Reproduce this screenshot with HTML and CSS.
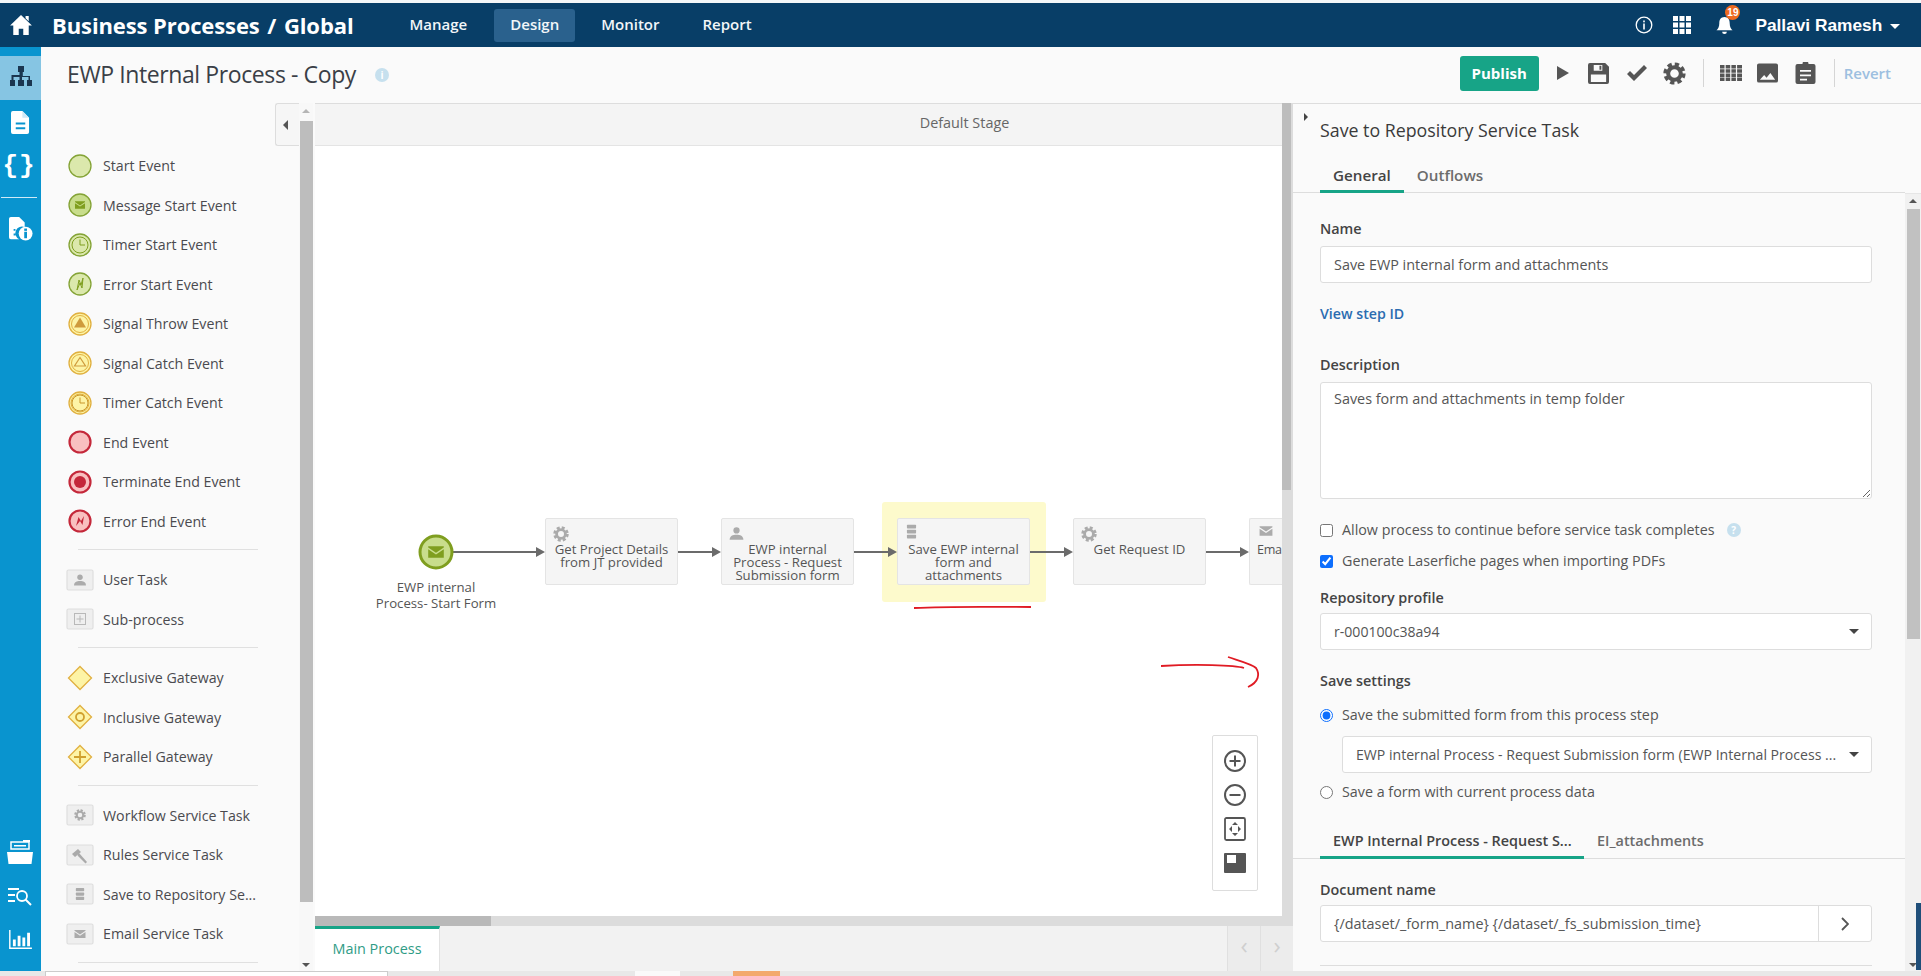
FILE: index.html
```html
<!DOCTYPE html>
<html lang="en">
<head>
<meta charset="utf-8">
<title>EWP Internal Process - Copy</title>
<link rel="stylesheet" href="styles.css">
</head>
<body>
<svg class="sprite" width="0" height="0">
  <defs>
    <symbol id="gear" viewBox="0 0 24 24">
      <circle cx="12" cy="12" r="9.3" fill="none" stroke="currentColor" stroke-width="4.6" stroke-dasharray="4.3 3"/>
      <circle cx="12" cy="12" r="6.6" fill="none" stroke="currentColor" stroke-width="4.2"/>
    </symbol>
    <symbol id="user" viewBox="0 0 24 24">
      <circle cx="12" cy="7" r="5" fill="currentColor"/>
      <path d="M1 22c0-6 5-8 11-8s11 2 11 8z" fill="currentColor"/>
    </symbol>
    <symbol id="mail" viewBox="0 0 24 24">
      <path d="M1 4h22v1.5L12 13 1 5.500zM1 8l11 7.500L23 8v12H1z" fill="currentColor"/>
    </symbol>
    <symbol id="stack" viewBox="0 0 24 24">
      <rect x="2" y="1" width="20" height="6" rx="1.500" fill="currentColor"/>
      <rect x="2" y="9" width="20" height="6" rx="1.500" fill="currentColor"/>
      <rect x="2" y="17" width="20" height="6" rx="1.500" fill="currentColor"/>
    </symbol>
    <symbol id="clock" viewBox="0 0 28 28">
      <circle cx="14" cy="14" r="8" fill="none" stroke="currentColor" stroke-width="1"/>
      <path d="M14 8.500V14h5" fill="none" stroke="currentColor" stroke-width="1"/>
    </symbol>
  </defs>
</svg>

<div class="topstrip"></div>
<header class="header">
  <svg class="home" viewBox="0 0 24 22" width="22" height="20"><path d="M12 0l12 11.500h-3.500V22H14.500v-7h-5v7H3.500V11.500H0zM17 1h3.500v6L17 3.500z" fill="#fff"/></svg>
  <div class="brand">Business Processes <span class="brand-sep">/</span> Global</div>
  <nav class="nav">
    <a class="nav-item">Manage</a>
    <a class="nav-item nav-active">Design</a>
    <a class="nav-item">Monitor</a>
    <a class="nav-item nav-last">Report</a>
  </nav>
  <div class="header-right">
    <svg class="hicon" viewBox="0 0 18 18" width="18" height="18"><circle cx="9" cy="9" r="7.800" fill="none" stroke="#fff" stroke-width="1.300"/><rect x="8.200" y="7.500" width="1.600" height="6" fill="#fff"/><rect x="8.200" y="4.500" width="1.600" height="1.800" fill="#fff"/></svg>
    <svg class="hicon" viewBox="0 0 18 18" width="18" height="18"><path d="M0 0h5v5H0zM6.500 0h5v5h-5zM13 0h5v5h-5zM0 6.500h5v5H0zM6.500 6.500h5v5h-5zM13 6.500h5v5h-5zM0 13h5v5H0zM6.500 13h5v5h-5zM13 13h5v5h-5z" fill="#fff"/></svg>
    <div class="bell">
      <svg viewBox="0 0 18 20" width="17" height="19"><path d="M9 1c4 0 5.500 3 5.500 6.500 0 4 1.500 6 3 7.500H.5c1.500-1.500 3-3.500 3-7.500C3.500 4 5 1 9 1zM6.500 16.500h5a2.500 2.500 0 0 1-5 0z" fill="#fff"/></svg>
      <span class="badge">19</span>
    </div>
    <div class="username">Pallavi Ramesh <span class="caret-white"></span></div>
  </div>
</header>

<div class="body">
  <aside class="rail">
    <div class="rail-top">
      <div class="rail-item rail-active">
        <svg viewBox="0 0 24 24" width="24" height="24"><path d="M9 0h6v6h-1.200v4H21v4h2v-1 7h-5v-6h1.500v-3h-6.500v3H15v6H9v-6h1.500v-3H4.500v3H6v6H1v-6h1.500v-5h8V6H9z" fill="#1b3650"/></svg>
      </div>
      <div class="rail-item">
        <svg viewBox="0 0 20 24" width="19" height="23"><path d="M2 0h10l7 7v15a2 2 0 0 1-2 2H2a2 2 0 0 1-2-2V2a2 2 0 0 1 2-2zM5 12v2h10v-2zM5 17v2h10v-2z" fill="#fff" fill-rule="evenodd"/><path d="M12 0l7 7h-7z" fill="#cfe9f6"/></svg>
      </div>
      <div class="rail-item rail-braces">{}</div>
      <div class="rail-divider"></div>
      <div class="rail-item">
        <svg viewBox="0 0 26 26" width="24" height="24"><path d="M2 0h9l6 6v5a7 7 0 0 0-6 13H2a2 2 0 0 1-2-2V2a2 2 0 0 1 2-2zM5 13v2h2v-2zM5 18v2h2v-2z" fill="#fff" fill-rule="evenodd"/><circle cx="18" cy="18" r="7.500" fill="#fff"/><rect x="16.500" y="16" width="3" height="7" fill="#0994cf"/><rect x="16.500" y="12.500" width="3" height="2.500" fill="#0994cf"/></svg>
      </div>
    </div>
    <div class="rail-bottom">
      <svg viewBox="0 0 26 26" width="26" height="26"><path d="M4 3h18v7H4z" fill="none" stroke="#fff" stroke-width="1.500"/><path d="M7 6h12v1.500H7zM16 1h7v2h-7z" fill="#fff"/><path d="M0 13h26l-1.500 12H1.500z" fill="#fff"/></svg>
      <svg viewBox="0 0 24 20" width="24" height="20"><path d="M0 2h11v2H0zM0 8h7v2H0zM0 14h7v2H0z" fill="#fff"/><circle cx="14" cy="10" r="5" fill="none" stroke="#fff" stroke-width="1.800"/><path d="M17.500 13.500L23 19" stroke="#fff" stroke-width="2"/></svg>
      <svg class="rail-chart" viewBox="0 0 24 20" width="23" height="19"><path d="M0 0h1.500v18.500H24V20H0zM4 10h3v7H4zM9 6h3v11H9zM14 8h3v9h-3zM19 3h3v14h-3z" fill="#fff"/></svg>
    </div>
  </aside>

  <main class="main">
    <div class="titlebar">
      <h1 class="page-title">EWP Internal Process - Copy</h1>
      <span class="title-info">i</span>
      <div class="toolbar">
        <button class="publish">Publish</button>
        <svg class="tb tb-play" viewBox="0 0 12 14" width="12" height="14"><path d="M0 0l12 7-12 7z"/></svg>
        <svg class="tb tb-save" viewBox="0 0 22 22" width="21" height="21"><path d="M2 0h16l4 4v16a2 2 0 0 1-2 2H2a2 2 0 0 1-2-2V2a2 2 0 0 1 2-2zm4 2v6h9V2zm6 1h2v4h-2zM3 12v8h16v-8z" fill-rule="evenodd"/></svg>
        <svg class="tb tb-check" viewBox="0 0 20 16" width="20" height="16"><path d="M0 9l3-3 4 4L17 0l3 3L7 16z"/></svg>
        <svg class="tb tb-gear" width="23" height="23"><use href="#gear"/></svg>
        <span class="tb-sep"></span>
        <svg class="tb tb-grid" viewBox="0 0 22 16" width="22" height="16"><path d="M0 0h4.500v3.500H0zM5.700 0h4.500v3.500H5.700zM11.400 0h4.500v3.500h-4.500zM17.100 0H22v3.500h-4.900zM0 4.200h4.500v3.500H0zM5.700 4.200h4.500v3.500H5.700zM11.400 4.200h4.500v3.500h-4.500zM17.100 4.200H22v3.500h-4.900zM0 8.400h4.500v3.500H0zM5.700 8.400h4.500v3.500H5.700zM11.400 8.400h4.500v3.500h-4.500zM17.100 8.400H22v3.500h-4.900zM0 12.500h4.500V16H0zM5.700 12.500h4.500V16H5.700zM11.400 12.500h4.500V16h-4.500zM17.100 12.500H22V16h-4.900z"/></svg>
        <svg class="tb tb-image" viewBox="0 0 22 20" width="21" height="20"><path d="M2 0h18a2 2 0 0 1 2 2v16a2 2 0 0 1-2 2H2a2 2 0 0 1-2-2V2a2 2 0 0 1 2-2zm1 17h16l-5-7-4 5-2.500-3z" fill-rule="evenodd"/></svg>
        <svg class="tb tb-clip" viewBox="0 0 20 22" width="21" height="22"><path d="M2 2h5a3 3 0 0 1 6 0h5a2 2 0 0 1 2 2v16a2 2 0 0 1-2 2H2a2 2 0 0 1-2-2V4a2 2 0 0 1 2-2zm2.500 6v1.800h11V8zm0 4.500v1.800h11v-1.800zm0 4.200v1.800h7v-1.800z" fill-rule="evenodd"/></svg>
        <span class="tb-sep tb-sep2"></span>
        <a class="revert">Revert</a>
      </div>
    </div>

    <div class="workspace">
      <section class="palette">
        <div class="palette-list">
          <div class="pitem"><svg class="pi" viewBox="0 0 28 28"><circle class="ev-green" cx="14" cy="14" r="11"/></svg><span>Start Event</span></div>
          <div class="pitem"><svg class="pi" viewBox="0 0 28 28"><circle class="ev-green2" cx="14" cy="14" r="11"/><svg x="8.500" y="8.500" width="11" height="11" class="c-olive"><use href="#mail"/></svg></svg><span>Message Start Event</span></div>
          <div class="pitem"><svg class="pi c-olive" viewBox="0 0 28 28"><circle class="ev-green" cx="14" cy="14" r="11"/><use href="#clock"/></svg><span>Timer Start Event</span></div>
          <div class="pitem"><svg class="pi" viewBox="0 0 28 28"><circle class="ev-green" cx="14" cy="14" r="11"/><path class="bolt-green" d="M11 20l2-10 2 5 2-7-1 10-2-5z"/></svg><span>Error Start Event</span></div>
          <div class="pitem"><svg class="pi" viewBox="0 0 28 28"><circle class="ev-yellow" cx="14" cy="14" r="11"/><circle class="ring-yellow" cx="14" cy="14" r="8.500"/><path class="tri-fill" d="M14 7.500l6 10H8z"/></svg><span>Signal Throw Event</span></div>
          <div class="pitem"><svg class="pi" viewBox="0 0 28 28"><circle class="ev-yellow" cx="14" cy="14" r="11"/><circle class="ring-yellow" cx="14" cy="14" r="8.500"/><path class="tri-line" d="M14 8.500l5.500 8.500h-11z"/></svg><span>Signal Catch Event</span></div>
          <div class="pitem"><svg class="pi c-amber" viewBox="0 0 28 28"><circle class="ev-yellow" cx="14" cy="14" r="11"/><circle class="ring-yellow" cx="14" cy="14" r="9"/><use href="#clock"/></svg><span>Timer Catch Event</span></div>
          <div class="pitem"><svg class="pi" viewBox="0 0 28 28"><circle class="ev-red" cx="14" cy="14" r="10.500"/></svg><span>End Event</span></div>
          <div class="pitem"><svg class="pi" viewBox="0 0 28 28"><circle class="ev-red" cx="14" cy="14" r="10.500"/><circle class="dot-red" cx="14" cy="14" r="6"/></svg><span>Terminate End Event</span></div>
          <div class="pitem"><svg class="pi" viewBox="0 0 28 28"><circle class="ev-red" cx="14" cy="14" r="10.500"/><path class="dot-red" d="M10 19l2.500-9 2.500 4 3-5-1.500 9-2.500-4z"/></svg><span>Error End Event</span></div>
          <div class="pdiv"></div>
          <div class="pitem"><svg class="pi c-grey" viewBox="0 0 28 28"><rect class="box" x="1" y="4" width="26" height="20" rx="1.500"/><svg x="7.500" y="7" width="13" height="14"><use href="#user"/></svg></svg><span>User Task</span></div>
          <div class="pitem"><svg class="pi" viewBox="0 0 28 28"><rect class="box" x="1" y="4" width="26" height="20" rx="1.500"/><rect class="sub" x="8.500" y="8.500" width="11" height="11"/><path class="sub" d="M14 10.500v7M10.500 14h7"/></svg><span>Sub-process</span></div>
          <div class="pdiv"></div>
          <div class="pitem"><svg class="pi" viewBox="0 0 28 28"><path class="gw" d="M14 2.500L25.500 14 14 25.500 2.500 14z"/></svg><span>Exclusive Gateway</span></div>
          <div class="pitem"><svg class="pi" viewBox="0 0 28 28"><path class="gw" d="M14 2.500L25.500 14 14 25.500 2.500 14z"/><circle class="gw-in" cx="14" cy="14" r="4"/></svg><span>Inclusive Gateway</span></div>
          <div class="pitem"><svg class="pi" viewBox="0 0 28 28"><path class="gw" d="M14 2.500L25.500 14 14 25.500 2.500 14z"/><path class="gw-in" d="M14 8v12M8 14h12"/></svg><span>Parallel Gateway</span></div>
          <div class="pdiv"></div>
          <div class="pitem"><svg class="pi c-grey" viewBox="0 0 28 28"><rect class="box" x="1" y="4" width="26" height="20" rx="1.500"/><svg x="8" y="8" width="12" height="12"><use href="#gear"/></svg></svg><span>Workflow Service Task</span></div>
          <div class="pitem"><svg class="pi" viewBox="0 0 28 28"><rect class="box" x="1" y="4" width="26" height="20" rx="1.500"/><path class="hammer" d="M6 13l6-5 3 3-6 5zM13 12l8 9-1.500 1.500-8-8z"/></svg><span>Rules Service Task</span></div>
          <div class="pitem"><svg class="pi c-grey" viewBox="0 0 28 28"><rect class="box" x="1" y="4" width="26" height="20" rx="1.500"/><svg x="9" y="7.500" width="10" height="13" preserveAspectRatio="none" viewBox="0 0 24 24"><use href="#stack"/></svg></svg><span>Save to Repository Se...</span></div>
          <div class="pitem"><svg class="pi c-grey" viewBox="0 0 28 28"><rect class="box" x="1" y="4" width="26" height="20" rx="1.500"/><svg x="8" y="8" width="12" height="12"><use href="#mail"/></svg></svg><span>Email Service Task</span></div>
          <div class="pdiv"></div>
        </div>
        <div class="collapse-tab"><span class="arrow-left"></span></div>
        <div class="pal-scroll">
          <span class="sb-up"></span>
          <span class="pal-thumb"></span>
          <span class="sb-down"></span>
        </div>
      </section>

      <section class="stage-col">
        <div class="stage-row">
          <div class="stage">
            <div class="stage-head">Default Stage</div>
            <div class="canvas">
              <div class="hl"></div>
              <svg class="wires" width="967" height="829">
                <g class="wire">
                  <path d="M138 406H221M362 406H397M539 406H573M715 406H749M891 406H925"/>
                </g>
                <g class="wire-head">
                  <path d="M221 401l9 5-9 5zM397 401l9 5-9 5zM573 401l9 5-9 5zM749 401l9 5-9 5zM925 401l9 5-9 5z"/>
                </g>
                <path class="red" d="M599 462C640 460 680 461 716 461"/>
                <path class="red" d="M846 520C880 518 920 519 929 522M913 511C925 515 937 518 941 522C945 528 944 536 933 541"/>
              </svg>

              <div class="start-node">
                <svg viewBox="0 0 36 36" width="36" height="36"><circle class="start-c" cx="18" cy="18" r="16"/><svg x="9.500" y="9.500" width="17" height="17" class="c-olive"><use href="#mail"/></svg></svg>
                <div class="start-label">EWP internal<br>Process- Start Form</div>
              </div>
              <div class="node n1"><svg class="nico nico-g"><use href="#gear"/></svg>Get Project Details from JT provided</div>
              <div class="node n2"><svg class="nico nico-u"><use href="#user"/></svg>EWP internal Process - Request Submission form</div>
              <div class="node n3"><svg class="nico nico-s" viewBox="0 0 24 24" preserveAspectRatio="none"><use href="#stack"/></svg>Save EWP internal form and attachments</div>
              <div class="node n4"><svg class="nico nico-g"><use href="#gear"/></svg>Get Request ID</div>
              <div class="node n5"><svg class="nico nico-m"><use href="#mail"/></svg>Ema</div>

              <div class="zoombox">
                <svg class="z" viewBox="0 0 24 24"><circle cx="12" cy="12" r="10"/><path d="M12 6.500v11M6.500 12h11"/></svg>
                <svg class="z" viewBox="0 0 24 24"><circle cx="12" cy="12" r="10"/><path d="M6.500 12h11"/></svg>
                <svg class="z z-fit" viewBox="0 0 24 24"><rect x="2" y="1" width="20" height="22" rx="1.500"/><path class="z-solid" d="M12 5l3 3H9zM12 19l3-3H9zM6 12l3-3v6zM18 12l-3-3v6z"/></svg>
                <svg class="z z-map" viewBox="0 0 24 24"><path d="M2 2h20a1 1 0 0 1 1 1v18a1 1 0 0 1-1 1H2a1 1 0 0 1-1-1V3a1 1 0 0 1 1-1zm2 2v8h9V4z" fill-rule="evenodd"/></svg>
              </div>
            </div>
            <div class="hscroll"><span class="hthumb"></span></div>
          </div>
          <div class="vscroll"><span class="vthumb"></span></div>
        </div>
        <div class="tabbar">
          <div class="main-tab">Main Process</div>
          <div class="tab-nav"><span class="tab-arrow">‹</span><span class="tab-arrow">›</span></div>
        </div>
      </section>

      <section class="panel">
        <span class="arrow-right"></span>
        <div class="panel-scroll">
          <h2 class="panel-title">Save to Repository Service Task</h2>
          <div class="tabs tabs-top">
            <span class="tab tab-on">General</span>
            <span class="tab">Outflows</span>
          </div>
          <label class="lbl lbl-name">Name</label>
          <input class="field" type="text" value="Save EWP internal form and attachments">
          <a class="stepid">View step ID</a>
          <label class="lbl lbl-desc">Description</label>
          <textarea class="area">Saves form and attachments in temp folder</textarea>
          <div class="chk chk1"><input type="checkbox"><span>Allow process to continue before service task completes</span><span class="help">?</span></div>
          <div class="chk chk2"><input type="checkbox" checked><span>Generate Laserfiche pages when importing PDFs</span></div>
          <label class="lbl lbl-repo">Repository profile</label>
          <div class="select"><span>r-000100c38a94</span><i class="caret"></i></div>
          <label class="lbl lbl-save">Save settings</label>
          <div class="chk rad1"><input type="radio" name="s" checked><span>Save the submitted form from this process step</span></div>
          <div class="select select-in"><span>EWP internal Process - Request Submission form (EWP Internal Process ...</span><i class="caret"></i></div>
          <div class="chk rad2"><input type="radio" name="s"><span>Save a form with current process data</span></div>
          <div class="tabs tabs-inner">
            <span class="tab tab-on tab-long">EWP Internal Process - Request S...</span>
            <span class="tab">EI_attachments</span>
          </div>
          <label class="lbl lbl-doc">Document name</label>
          <div class="docfield"><span class="doc-val">{/dataset/_form_name} {/dataset/_fs_submission_time}</span><span class="doc-btn"><svg viewBox="0 0 8 14" width="8" height="14"><path d="M1 1l6 6-6 6" fill="none" stroke="#555" stroke-width="1.800"/></svg></span></div>
          <div class="endline"></div>
        </div>
        <div class="panel-sb">
          <span class="sb-up sb-up2"></span>
          <span class="panel-thumb"></span>
          <span class="sb-down"></span>
        </div>
      </section>
    </div>
  </main>
</div>
<div class="taskstrip">
  <span class="ts-white"></span>
  <span class="ts-light"></span>
  <span class="ts-orange"></span>
</div>
<span class="edge-thumb"></span>
</body>
</html>
```

FILE: styles.css
```css
* { box-sizing: border-box; }
html, body { margin: 0; padding: 0; height: 976px; overflow: hidden; }
body { font-family: "Open Sans", sans-serif; font-size: 14px; color: #444; background: #fafafa; position: relative; }
.sprite { position: absolute; }
.topstrip { height: 3px; background: #f4f6f8; }

/* Header */
.header { height: 44px; background: #083e67; display: flex; align-items: center; color: #fff; padding-left: 10px; }
.home { flex: none; }
.brand { margin-left: 20px; font-size: 22px; font-weight: 700; white-space: nowrap; letter-spacing: -.1px; }
.brand-sep { margin: 0 2px; }
.nav { display: flex; margin-left: 42px; align-items: center; }
.nav-item { font-size: 15px; font-weight: 600; padding: 0 26px; height: 33px; line-height: 31px; border-radius: 3px; color: #f2f6f9; }
.nav-item:first-child { padding: 0 27px 0 14px; }
.nav-active { background: #2a618d; padding: 0 15px; width: 81px; text-align: center; }
.nav-last { padding-left: 17px; }
.header-right { margin-left: auto; display: flex; align-items: center; padding-right: 21px; }
.hicon { flex: none; margin-right: 20px; }
.bell { position: relative; width: 17px; height: 19px; margin-left: 5px; margin-right: 22px; }
.badge { position: absolute; left: 9px; top: -11px; width: 15px; height: 15px; border-radius: 50%; background: #ee6a1f; color: #fff; font: 700 10px/15px "Liberation Sans", sans-serif; text-align: center; }
.username { font: 700 17.300px/22px "Liberation Sans", sans-serif; color: #fff; white-space: nowrap; }
.caret-white { display: inline-block; margin-left: 3px; vertical-align: middle; border: 5px solid transparent; border-top-color: #fff; border-bottom-width: 0; }

/* Body */
.body { display: flex; height: 924px; }
.rail { width: 41px; flex: none; background: #0994cf; padding-top: 9px; display: flex; flex-direction: column; justify-content: space-between; padding-bottom: 22px; }
.rail-top { display: flex; flex-direction: column; align-items: stretch; }
.rail-item { height: 44px; display: flex; align-items: center; justify-content: center; color: #fff; }
.rail-active { background: #86c5e3; }
.rail-braces { font-size: 26px; font-weight: 700; font-family: "Liberation Mono", monospace; letter-spacing: 1px; padding-right: 3px; }
.rail-divider { height: 1px; margin: 9px 4px 9px 1px; background: #cfeaf7; }
.rail-bottom { display: flex; flex-direction: column; align-items: center; gap: 21px; padding-right: 1px; }
.rail-chart { margin-top: 3px; }

.main { flex: 1; min-width: 0; display: flex; flex-direction: column; }
.titlebar { height: 56px; display: flex; align-items: center; padding-left: 27px; flex: none; }
.page-title { font-size: 23px; font-weight: 400; color: #3a3f47; margin: -3px 0 0 -1px; white-space: nowrap; letter-spacing: -.4px; }
.title-info { width: 14px; height: 14px; border-radius: 50%; background: #c6e0ee; color: #fff; font-size: 10px; font-weight: 700; line-height: 14px; text-align: center; margin-left: 19px; }
.toolbar { margin-left: auto; display: flex; align-items: center; padding-right: 30px; margin-top: -4px; }
.publish { width: 79px; height: 35px; border: 0; border-radius: 3px; background: #17a487; color: #fff; font: 700 15px "Open Sans", sans-serif; margin-right: 18px; }
.tb { fill: #555; color: #555; flex: none; margin-right: 19px; }
.tb-save { margin-right: 18px; }
.tb-check { margin-right: 16px; }
.tb-gear { margin-right: 17px; }
.tb-sep { width: 1px; height: 28px; background: #d5d5d5; margin-right: 16px; }
.tb-grid { margin-right: 15px; }
.tb-image { margin-right: 17px; }
.tb-clip { margin-right: 18px; }
.tb-sep2 { margin-right: 9px; }
.revert { color: #9dbfe0; font-size: 15px; font-weight: 600; }

.workspace { flex: 1; display: flex; min-height: 0; height: 868px; }

/* Palette */
.palette { width: 274px; flex: none; position: relative; padding-top: 43px; }
.palette-list { padding-left: 25px; width: 245px; }
.pitem { height: 39.500px; display: flex; align-items: center; gap: 9px; font-size: 14.200px; color: #4a4a4f; white-space: nowrap; }
.pi { width: 28px; height: 28px; flex: none; color: #aaa; }
.pdiv { height: 1px; background: #e0e0e0; margin: 8px 0 10px 12px; width: 180px; }
.ev-green { fill: #dbe8ac; stroke: #84a336; stroke-width: 1.300; }
.ev-green2 { fill: #c8dd8c; stroke: #84a336; stroke-width: 1.300; }
.c-olive { color: #7f9e1f; }
.c-amber { color: #c9962a; }
.bolt-green { fill: none; stroke: #7f9e1f; stroke-width: 1; }
.ev-yellow { fill: #fdf4a6; stroke: #e0b040; stroke-width: 1.300; }
.ring-yellow { fill: none; stroke: #e0b040; stroke-width: 1; }
.tri-fill { fill: #cf9b3c; }
.tri-line { fill: none; stroke: #cf9b3c; stroke-width: 1.200; }
.ev-red { fill: #f9c0c0; stroke: #c4283a; stroke-width: 2.200; }
.dot-red { fill: #c4283a; }
.box { fill: #efefef; stroke: #dedede; stroke-width: 1.200; }
.c-grey { color: #ababab; }
.sub { fill: none; stroke: #b9b9b9; stroke-width: 1; }
.gw { fill: #fdf4a6; stroke: #e0b040; stroke-width: 1.300; }
.gw-in { fill: none; stroke: #d0a02e; stroke-width: 1.800; }
.hammer { fill: #aaa; }
.collapse-tab { position: absolute; left: 234px; top: 0; width: 24px; height: 43px; border: 1px solid #ddd; border-right: 0; border-radius: 3px 0 0 3px; background: #f6f6f6; display: flex; align-items: center; padding-left: 7px; }
.arrow-left { border: 5px solid transparent; border-right-color: #555; border-left-width: 0; }
.pal-scroll { position: absolute; left: 258px; top: 0; width: 14px; height: 868px; background: #f8f8f8; display: flex; flex-direction: column; align-items: center; }
.pal-thumb { width: 13px; height: 781px; margin-top: 8px; background: #bdbdbd; }
.sb-up { flex: none; margin-top: 6px; border: 4px solid transparent; border-bottom-color: #b5b5b5; border-top-width: 0; }
.sb-down { flex: none; margin-top: auto; margin-bottom: 4px; border: 4px solid transparent; border-top-color: #555; border-bottom-width: 0; }

/* Stage */
.stage-col { width: 978px; flex: none; display: flex; flex-direction: column; }
.stage-row { height: 823px; display: flex; }
.stage { width: 967px; flex: none; display: flex; flex-direction: column; border-top: 1px solid #ddd; }
.stage-head { height: 42px; flex: none; background: #f4f4f4; border-bottom: 1px solid #e4e4e4; text-align: center; font-size: 14.400px; line-height: 38px; color: #666; padding-left: 332px; }
.canvas { flex: 1; background: #fff; position: relative; overflow: hidden; }
.hscroll { height: 10px; flex: none; background: #dcdcdc; }
.hthumb { display: block; width: 176px; height: 10px; background: #b9b9b9; }
.vscroll { width: 11px; flex: none; background: #dcdcdc; }
.vthumb { display: block; width: 9px; height: 387px; background: #bdbdbd; }
.wires { position: absolute; left: 0; top: 0; }
.wire path { fill: none; stroke: #6b6b6b; stroke-width: 1.800; }
.wire-head path { fill: #6b6b6b; }
.red { fill: none; stroke: #e01b24; stroke-width: 1.800; }
.hl { position: absolute; left: 567px; top: 356px; width: 164px; height: 100px; background: #fdfacc; border-radius: 3px; }
.start-node { position: absolute; left: 41px; top: 388px; width: 160px; text-align: center; font-size: 13.200px; line-height: 16px; color: #555; display: flex; flex-direction: column; align-items: center; gap: 9px; }
.start-c { fill: #c8dd8c; stroke: #7f9e1f; stroke-width: 3; }
.node { position: absolute; top: 372px; width: 133px; height: 67px; background: #f5f5f5; border: 1px solid #e4e4e4; border-radius: 2px; padding: 23.500px 6px 0; text-align: center; font-size: 13.200px; line-height: 13px; color: #555; overflow: hidden; }
.n1 { left: 230px; }
.n2 { left: 406px; }
.n3 { left: 582px; }
.n4 { left: 758px; }
.n5 { left: 934px; width: 33px; border-right: 0; border-radius: 2px 0 0 2px; padding: 23.500px 0 0 7px; text-align: left; white-space: nowrap; font-size: 12.600px; letter-spacing: -.3px; }
.nico { position: absolute; left: 7px; top: 6px; width: 15px; height: 15px; color: #ababab; }
.nico-g { width: 16px; height: 16px; left: 7px; top: 7px; }
.nico-u { left: 7px; top: 7px; }
.nico-s { width: 11px; height: 15px; left: 8px; top: 5px; }
.nico-m { width: 14px; height: 14px; left: 9px; top: 5px; }
.zoombox { position: absolute; left: 897px; top: 589px; width: 46px; height: 156px; background: #fff; border: 1px solid #ddd; border-radius: 2px; display: flex; flex-direction: column; align-items: center; padding-top: 13px; gap: 10px; }
.z { width: 24px; height: 24px; fill: none; stroke: #555; stroke-width: 2; flex: none; }
.z-fit { stroke-width: 1.800; }
.z-solid { fill: #555; stroke: none; }
.z-map { fill: #555; stroke: none; }

.tabbar { height: 45px; background: #f2f2f2; display: flex; justify-content: space-between; }
.main-tab { width: 125px; border-top: 3px solid #17a487; background: #fff; border-right: 1px solid #e2e2e2; font-size: 14.400px; font-weight: 500; text-align: center; line-height: 40px; color: #2f9c86; }
.tab-nav { display: flex; width: 66px; }
.tab-arrow { flex: 1; background: #ececec; border-left: 1px solid #e0e0e0; text-align: center; color: #cfcfcf; font-size: 24px; line-height: 38px; }

/* Panel */
.panel { flex: 1; min-width: 0; position: relative; display: flex; border-top: 1px solid #ddd; background: #fafafa; }
.arrow-right { position: absolute; left: 11px; top: 9px; border: 4px solid transparent; border-left-color: #444; border-right-width: 0; }
.panel-scroll { flex: 1; min-width: 0; padding: 0 33px 0 27px; font-size: 14.400px; }
.panel-sb { width: 16px; flex: none; background: #f1f1f1; display: flex; flex-direction: column; align-items: center; position: relative; margin-top: 89px; border-top: 1px solid #e6e6e6; }
.sb-up2 { border-bottom-color: #555; margin-top: 5px; }
.panel-thumb { width: 13px; margin-top: 6px; height: 430px; background: #c1c1c1; }
.panel-title { font-size: 17.800px; font-weight: 500; color: #3a3a3a; margin: 14px 0 0; line-height: 24px; white-space: nowrap; }
.tabs { display: flex; border-bottom: 1px solid #ddd; }
.tabs-top { margin: 18px -33px 0 -27px; padding-left: 27px; height: 33px; }
.tabs-inner { margin: 24px -33px 0 -27px; padding-left: 27px; height: 33px; }
.tab { font-size: 15.200px; font-weight: 600; color: #6c6c6c; line-height: 30px; padding: 0 13px; height: 33px; white-space: nowrap; }
.tab-on { color: #444; border-bottom: 3px solid #17a487; }
.tabs-inner .tab { font-size: 14.400px; line-height: 29px; padding: 0 13px; }
.tabs-inner .tab-long { width: 264px; }
.lbl { display: block; font-size: 14.400px; font-weight: 600; color: #444; line-height: 20px; }
.lbl-name { margin-top: 26px; margin-bottom: 7px; }
.field { display: block; width: 100%; height: 37px; border: 1px solid #ddd; border-radius: 3px; background: #fff; font: 14.400px "Open Sans", sans-serif; color: #555; padding: 0 13px; outline: 0; }
.stepid { display: block; margin-top: 21px; font-size: 14.200px; font-weight: 600; color: #2b6cb0; line-height: 20px; }
.lbl-desc { margin-top: 31px; margin-bottom: 7px; }
.area { display: block; width: 100%; height: 117px; border: 1px solid #ddd; border-radius: 3px; background: #fff; font: 14.400px/18px "Open Sans", sans-serif; color: #555; padding: 7px 13px; outline: 0; }
.chk { display: flex; align-items: center; font-size: 14.300px; color: #555; line-height: 20px; height: 20px; white-space: nowrap; }
.chk input { margin: 0 9px 0 0; width: 13px; height: 13px; flex: none; accent-color: #0d6efd; }
.chk1 { margin-top: 21px; }
.chk2 { margin-top: 11px; }
.help { width: 14px; height: 14px; border-radius: 50%; background: #c6e0ee; color: #fff; font-size: 10px; font-weight: 700; text-align: center; line-height: 14px; margin-left: 12px; }
.lbl-repo { margin-top: 17px; margin-bottom: 5px; }
.select { height: 37px; border: 1px solid #ddd; border-radius: 3px; background: #fff; display: flex; align-items: center; justify-content: space-between; padding: 0 12px 0 13px; font-size: 14.100px; color: #555; white-space: nowrap; }
.caret { border: 5px solid transparent; border-top-color: #444; border-bottom-width: 0; flex: none; margin-left: 6px; }
.lbl-save { margin-top: 21px; }
.rad1 { margin-top: 14px; }
.select-in { margin: 11px 0 0 22px; padding: 0 12px 0 13px; }
.rad2 { margin-top: 9px; }
.lbl-doc { margin-top: 21px; margin-bottom: 5px; }
.docfield { height: 37px; display: flex; align-items: center; border: 1px solid #ddd; border-radius: 3px; background: #fff; font-size: 14.400px; color: #555; }
.doc-val { flex: 1; padding-left: 13px; white-space: nowrap; }
.doc-btn { width: 53px; height: 100%; border-left: 1px solid #ddd; display: flex; align-items: center; justify-content: center; }
.endline { height: 1px; background: #ddd; margin-top: 23px; }

/* Bottom window strip */
.taskstrip { height: 5px; background: #e8e8e8; display: flex; position: relative; }
.ts-white { margin-left: 45px; width: 343px; background: #fff; border: 1px solid #ccc; border-bottom: 0; }
.ts-light { margin-left: 247px; width: 45px; background: #fafafa; }
.ts-orange { margin-left: 53px; width: 47px; background: #f3a96d; }
.edge-thumb { position: absolute; right: 0; top: 903px; width: 5px; height: 67px; background: #1f4e79; }
```
